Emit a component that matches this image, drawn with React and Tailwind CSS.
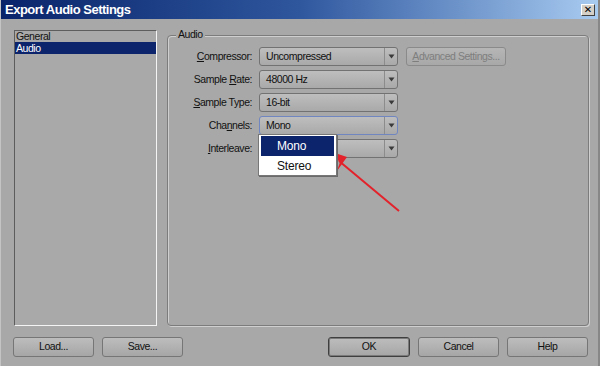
import React from "react";

function Arrow() {
  return (
    <svg width="7" height="5" viewBox="0 0 7 5">
      <path d="M0.5 0.5 L6.5 0.5 L3.5 4.5 Z" fill="#3a3a3a" />
    </svg>
  );
}

function Drop({ text, focused, children }) {
  return (
    <div
      className={
        "relative h-[19px] w-[139px] rounded-[3px] border flex items-center bg-gradient-to-b from-[#bebebe] to-[#a9a9a9] " +
        (focused ? "border-[#6f86c0]" : "border-[#727272]")
      }
    >
      <span className="flex-1 pl-[6px] leading-none whitespace-nowrap">{text}</span>
      <div className="w-[13px] h-full border-l border-[#8c8c8c] flex items-center justify-center">
        <Arrow />
      </div>
      {children}
    </div>
  );
}

function Btn({ children, w, def, cls = "" }) {
  return (
    <div
      className={
        "h-[20px] rounded-[3px] flex items-center justify-center bg-gradient-to-b from-[#bdbdbd] to-[#a6a6a6] " +
        (def
          ? "border border-[#3f3f3f] shadow-[inset_0_0_0_1px_#7a7a7a] "
          : "border border-[#767676] ") +
        cls
      }
      style={{ width: w }}
    >
      {children}
    </div>
  );
}

function Label({ children }) {
  return <div className="text-right pr-[1px] leading-none flex items-center justify-end h-[19px] whitespace-nowrap">{children}</div>;
}

export default function App() {
  return (
    <div className="relative w-[600px] h-[366px] overflow-hidden bg-[#a8a8a8] flex flex-col text-[10.5px] tracking-[-0.45px] text-[#111] font-['Liberation_Sans',sans-serif] border-l border-l-[#c4c4c4] border-r-2 border-r-[#878787]">
      {/* title bar */}
      <div className="h-[19px] shrink-0 flex items-center justify-between pl-[4px] pr-[3px] bg-gradient-to-r from-[#0a246a] via-[#2f579e] to-[#a8cbf0]">
        <span className="text-white font-bold text-[13px] leading-none tracking-[-0.5px]">Export Audio Settings</span>
        <div className="w-[14px] h-[12px] bg-[#d4d0c8] border border-t-white border-l-white border-b-[#404040] border-r-[#404040] flex items-center justify-center text-[10px] font-bold leading-none text-black tracking-normal font-['DejaVu_Sans',sans-serif]">
          ✕
        </div>
      </div>

      {/* body */}
      <div className="flex mt-[11px]">
        {/* list */}
        <div className="ml-[13px] w-[143px] h-[296px] border border-t-[#5d5d5d] border-l-[#5d5d5d] border-b-[#f4f4f4] border-r-[#f4f4f4] bg-[#a9a9a9]">
          <div className="h-[11px] flex items-center pl-[1px] leading-none">General</div>
          <div className="h-[12px] flex items-center pl-[1px] bg-[#0b246b] text-white leading-none">Audio</div>
        </div>

        {/* group box */}
        <div className="relative ml-[10px] mt-[5px] w-[422px] h-[291px] rounded-[4px] border border-[#7c7c7c] shadow-[1px_1px_0_#cfcfcf,inset_1px_1px_0_#cfcfcf]">
          <span className="absolute left-[8px] top-[-7px] px-[2px] bg-[#a8a8a8] leading-none">Audio</span>
          <div className="grid grid-cols-[85px_139px_auto] gap-x-[6px] gap-y-[4px] pt-[11px] items-center">
            <Label>
              <span><u>C</u>ompressor:</span>
            </Label>
            <Drop text="Uncompressed" />
            <div className="ml-[2px] w-[100px] h-[19px] rounded-[3px] border border-[#8a8a8a] bg-gradient-to-b from-[#b6b6b6] to-[#a8a8a8] flex items-center justify-center text-[#7e7e7e] leading-none whitespace-nowrap">
              <span><u>A</u>dvanced Settings...</span>
            </div>

            <Label>
              <span>Sample <u>R</u>ate:</span>
            </Label>
            <Drop text="48000 Hz" />
            <div />

            <Label>
              <span><u>S</u>ample Type:</span>
            </Label>
            <Drop text="16-bit" />
            <div />

            <Label>
              <span>Cha<u>n</u>nels:</span>
            </Label>
            <Drop text="Mono" focused>
              <div className="absolute left-[-2px] top-[17px] z-10 w-[79px] h-[42px] bg-white border border-[#777] shadow-[1px_1px_0_#6a6a6a] pt-[1px] px-[2px] text-[12px] tracking-[-0.2px]">
                <div className="h-[20px] bg-[#0b246b] text-white flex items-center pl-[16px] leading-none">Mono</div>
                <div className="h-[19px] flex items-center pl-[16px] leading-none">Stereo</div>
              </div>
            </Drop>
            <div />

            <Label>
              <span><u>I</u>nterleave:</span>
            </Label>
            <Drop text="" />
            <div />
          </div>
        </div>
      </div>

      {/* buttons */}
      <div className="flex mt-[11px]">
        <Btn w={81} cls="ml-[12px]">Load...</Btn>
        <Btn w={81} cls="ml-[8px]">Save...</Btn>
        <Btn w={82} def cls="ml-[145px]">OK</Btn>
        <Btn w={81} cls="ml-[8px]">Cancel</Btn>
        <Btn w={81} cls="ml-[8px]">Help</Btn>
      </div>

      {/* red annotation arrow */}
      <svg className="absolute left-0 top-0 pointer-events-none" width="600" height="366" viewBox="0 0 600 366">
        <line x1="398" y1="211" x2="338" y2="161" stroke="#e3222b" strokeWidth="2" />
        <polygon points="325,150 346,157 336,171 339,162" fill="#e3222b" />
      </svg>
    </div>
  );
}
